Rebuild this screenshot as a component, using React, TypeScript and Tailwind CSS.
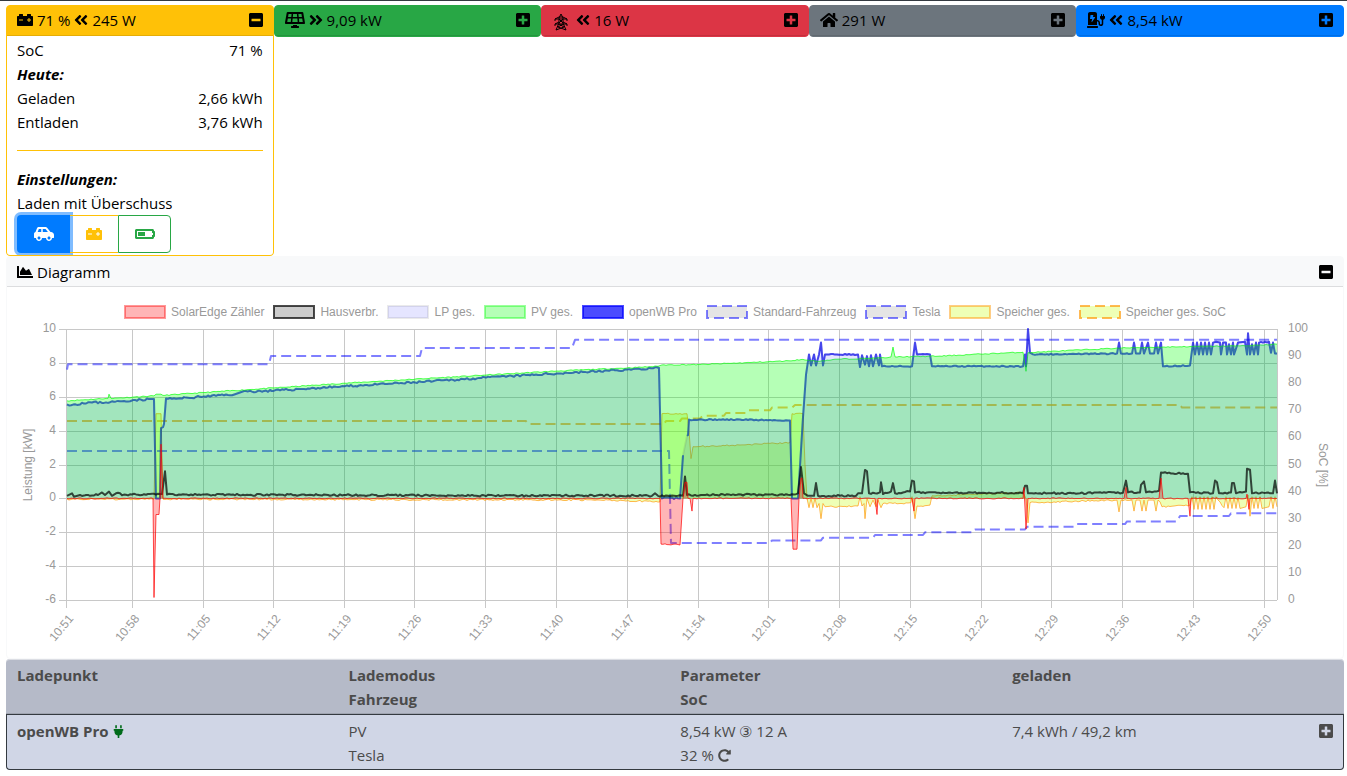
import { useMemo } from "react";
import type { ReactNode } from "react";
import {
  FaAngleDoubleLeft,
  FaAngleDoubleRight,
  FaBatteryHalf,
  FaCarBattery,
  FaCarSide,
  FaChargingStation,
  FaChartArea,
  FaHome,
  FaMinusSquare,
  FaPlug,
  FaPlusSquare,
  FaRedoAlt,
  FaSolarPanel,
} from "react-icons/fa";

type Point = [number, number];

const PLOT = { left: 67, right: 1277, top: 329, bottom: 600 };

const kwToY = (kw: number) => PLOT.top + ((10 - kw) * (PLOT.bottom - PLOT.top)) / 16;
const socToY = (soc: number) => PLOT.bottom - (soc * (PLOT.bottom - PLOT.top)) / 100;

const X_TICKS: [number, string][] = [
  [67, "10:51"],
  [133, "10:58"],
  [204, "11:05"],
  [274, "11:12"],
  [345, "11:19"],
  [415, "11:26"],
  [486, "11:33"],
  [557, "11:40"],
  [628, "11:47"],
  [699, "11:54"],
  [769, "12:01"],
  [840, "12:08"],
  [911, "12:15"],
  [982, "12:22"],
  [1052, "12:29"],
  [1123, "12:36"],
  [1194, "12:43"],
  [1265, "12:50"],
];

const KW_TICKS = [10, 8, 6, 4, 2, 0, -2, -4, -6];
const SOC_TICKS = [100, 90, 80, 70, 60, 50, 40, 30, 20, 10, 0];

// swings between two values, one turn every step
function zigzag(from: number, to: number, step: number, a: number, b: number): Point[] {
  const out: Point[] = [];
  for (let x = from, i = 0; x <= to; x += step, i++) {
    out.push([x, i % 2 === 0 ? a : b]);
  }
  return out;
}

const PV: Point[] = [
  [67, 5.76], [106, 5.9], [108, 5.9], [109, 6.15], [111, 5.9], [133, 5.98], [154, 6.05], [156, 6.15], [161, 6.15],
  [163, 6.08], [204, 6.25], [274, 6.52], [345, 6.8], [415, 7.04], [486, 7.28], [557, 7.52], [627, 7.7], [658, 7.8],
  [662, 7.88], [700, 7.9], [750, 8.02], [789, 8.12], [801, 8.2], [817, 8.1], [839, 8.22], [887, 8.3], [891, 8.35],
  [893, 8.93], [895, 8.35], [940, 8.4], [981, 8.52], [1023, 8.63], [1026, 7.5], [1028, 8.6], [1051, 8.68],
  [1122, 8.88], [1193, 8.97], [1240, 9], [1277, 9.1],
];

const WALLBOX_A: Point[] = [
  [67, 5.55], [80, 5.55], [82, 5.65], [110, 5.68], [133, 5.8], [154, 5.87], [156, 0], [160, 0], [161, 4.15], [163, 4.2],
  [164, 4.4], [166, 5.9], [176, 5.88], [204, 6.02], [235, 6.15], [242, 6.3], [274, 6.36], [345, 6.62], [415, 6.85],
  [486, 7.13], [557, 7.38], [627, 7.6], [659, 7.7], [662, 0], [680, 0], [683, 2.55],
];

const WALLBOX_B: Point[] = [
  [687, 3.7], [688, 3.75], [689, 4.65], [740, 4.65], [790, 4.6], [792, 0], [798, 0], [803, 4.8], [806, 7.3], [809, 8.5],
  [811, 7.85], [814, 8.5], [816, 7.85], [819, 8.5], [821, 9.2], [823, 7.85], [825, 8.5], [858, 8.5], [860, 7.75],
  [862, 8.45], [865, 7.9], [867, 8.4], [869, 7.8], [871, 8.45], [873, 7.8], [876, 8.5], [879, 7.85], [880, 8.5],
  [882, 7.8], [912, 7.8], [915, 9.2], [917, 8.5], [930, 8.5], [932, 7.8], [1023, 7.8], [1025, 8.5], [1026, 7.8],
  [1028, 10], [1030, 8.6], [1033, 8.5], [1117, 8.55], [1119, 9.2], [1121, 8.55], [1132, 8.55], [1134, 9.2],
  [1136, 8.55], [1140, 8.55], [1142, 9.2], [1144, 8.55], [1148, 9.2], [1150, 8.55], [1154, 8.55], [1156, 9.2],
  [1158, 8.55], [1161, 9.2], [1163, 7.8], [1190, 7.85], [1193, 9.2],
  ...zigzag(1195, 1214, 2, 8.5, 9.2),
  [1216, 9.25], [1220, 9.2], [1221, 8.5], [1223, 9.2], [1226, 9.2], [1227, 8.5], [1229, 9.1], [1231, 8.5],
  [1233, 9.2], [1234, 8.5], [1238, 9.2], [1245, 9.25], [1247, 8.5], [1248, 9.75], [1250, 8.5], [1252, 9.1],
  [1254, 8.5], [1256, 9.2], [1258, 8.5], [1259, 9.2], [1269, 9.25], [1271, 8.6], [1273, 9.2], [1275, 8.55],
  [1277, 8.55],
];

const HOUSE: Point[] = [
  [67, 0.15], [72, 0.3], [74, 0.1], [80, 0.2], [98, 0.2], [102, 0.35], [105, 0.2], [109, 0.4], [112, 0.15], [116, 0.3],
  [124, 0.22], [162, 0.25], [165, 1.6], [167, 0.22], [300, 0.2], [450, 0.17], [620, 0.16], [652, 0.15], [655, 0.3],
  [658, 0.15], [683, 0.15], [685, 1.3], [687, 0.2], [770, 0.22], [790, 0.2], [798, 0.3], [801, 1.85], [804, 0.3],
  [808, 0.15], [814, 0.15], [816, 0.9], [818, 0.15], [856, 0.15], [858, 0.3], [862, 0.3], [865, 1.68], [867, 1.6],
  [869, 0.3], [880, 0.35], [881, 0.95], [883, 0.25], [891, 0.4], [893, 0.9], [895, 0.3], [910, 0.4], [912, 1.05],
  [914, 1], [915, 0.35], [1000, 0.33], [1023, 0.3], [1025, 0.75], [1027, 0.75], [1028, 0.3], [1123, 0.33],
  [1126, 1.05], [1128, 0.35], [1140, 0.35], [1141, 0.8], [1144, 1], [1146, 0.35], [1159, 0.45], [1161, 1.52],
  [1188, 1.45], [1190, 0.35], [1213, 0.3], [1215, 1.05], [1217, 0.95], [1219, 0.3], [1231, 0.35], [1232, 0.9],
  [1234, 0.9], [1236, 0.3], [1246, 0.4], [1247, 1.75], [1250, 1.7], [1252, 0.3], [1273, 0.3], [1275, 1.05],
  [1277, 0.3],
];

const METER: Point[] = [
  [67, 0], [153, 0], [154, -5.85], [156, -0.95], [159, -0.95], [160, 0], [161, 3.2], [163, 0], [660, 0], [661, -2.7],
  [680, -2.75], [683, 0], [685, 0.95], [687, 0.95], [688, 0], [690, 0], [692, -0.75], [693, 0], [791, 0],
  [793, -3], [797, -3], [799, 0], [801, 1.2], [802, 1.2], [803, 0], [875, 0], [877, -0.95], [878, 0], [912, 0],
  [914, -0.75], [915, 0], [1023, 0], [1024, 0.65], [1026, -1.8], [1028, 0], [1124, 0], [1126, 0.65], [1127, 0],
  [1159, 0], [1161, 1.2], [1163, 0], [1188, 0], [1190, -1.05], [1191, 0], [1246, 0], [1247, 0.25], [1249, -0.65],
  [1250, 0], [1277, 0],
];

const STORAGE: Point[] = [
  [67, -0.05], [154, -0.05], [156, 5], [161, 5], [163, -0.05], [600, -0.1], [660, -0.2], [662, 5], [687, 5], [689, 4],
  [691, 2.35], [693, 3.05], [740, 3.15], [790, 3.3], [792, 5], [803, 5], [805, 2], [807, 0],
  ...zigzag(809, 817, 2, -0.55, 0),
  [819, -0.3], [821, -1.2], [823, -0.3], [825, -0.5], [858, -0.45], [860, 0.1], [862, -0.45], [864, -0.3],
  [865, -1.2], [867, 0], [870, -0.5], [873, -0.1], [876, -0.5], [878, -0.1], [881, -0.55], [883, -0.3],
  [900, -0.3], [911, -0.25], [912, 0.1], [915, -1.2], [917, -0.45], [930, -0.4], [932, 0.15], [1000, 0.3],
  [1023, 0.35], [1026, 0], [1028, -1.45], [1030, -0.25], [1117, -0.1], [1119, -0.8], [1121, -0.1], [1132, -0.1],
  [1134, -0.75], [1136, -0.1], [1140, -0.1], [1142, -0.75], [1144, -0.1], [1146, -0.75], [1148, -0.1],
  [1154, -0.1], [1156, -0.75], [1158, -0.1], [1160, -0.2], [1162, -0.5], [1190, -0.4],
  ...zigzag(1192, 1216, 2, 0.1, -0.65),
  [1224, -0.55], [1226, 0.1],
  ...zigzag(1228, 1240, 2, -0.6, 0.05),
  [1246, -0.5], [1248, 0.2], [1250, -1.05], [1252, 0.1],
  ...zigzag(1254, 1262, 2, -0.6, 0.1),
  [1269, -0.5], [1271, 0.1], [1273, -0.6], [1275, 0.1], [1277, -0.5],
];

const STANDARD_SOC: Point[] = [
  [67, 85], [68, 87], [269, 87], [271, 90], [420, 90], [422, 93], [572, 93], [575, 96], [1277, 96],
];

const TESLA_SOC: Point[] = [
  [67, 55], [669, 55], [671, 21], [770, 21], [772, 22], [821, 22], [823, 23], [873, 23], [875, 24], [923, 24],
  [925, 25], [973, 25], [975, 26], [1025, 26], [1027, 27], [1075, 27], [1077, 28], [1125, 28], [1127, 29],
  [1177, 29], [1180, 31], [1229, 31], [1231, 32], [1277, 32],
];

const STORAGE_SOC: Point[] = [
  [67, 66], [526, 66], [528, 65], [664, 65], [666, 66], [680, 66], [682, 67], [700, 67], [703, 68], [724, 68],
  [726, 69], [747, 69], [749, 70], [770, 70], [772, 71], [792, 71], [795, 72], [1180, 72], [1182, 71], [1277, 71],
];

// fills the long stretches with samples that jitter a little
function withJitter(points: Point[], amount: number, seed: number): Point[] {
  let state = seed;
  const next = () => {
    state = (state * 16807) % 2147483647;
    return state / 2147483647 - 0.5;
  };
  const out: Point[] = [points[0]];
  for (let i = 1; i < points.length; i++) {
    const [x0, v0] = points[i - 1];
    const [x1, v1] = points[i];
    if (x1 - x0 > 7) {
      for (let x = x0 + 2; x < x1 - 1; x += 2) {
        out.push([x, v0 + ((v1 - v0) * (x - x0)) / (x1 - x0) + next() * amount]);
      }
    }
    out.push([x1, v1]);
  }
  return out;
}

function linePath(points: Point[], toY: (v: number) => number) {
  return points.map(([x, v], i) => `${i === 0 ? "M" : "L"}${x} ${toY(v).toFixed(1)}`).join("");
}

function areaPath(points: Point[]) {
  const zero = kwToY(0).toFixed(1);
  return `${linePath(points, kwToY)}L${points[points.length - 1][0]} ${zero}L${points[0][0]} ${zero}Z`;
}

interface LegendEntry {
  label: string;
  fill: string;
  stroke: string;
  dashed?: boolean;
}

const LEGEND: LegendEntry[] = [
  { label: "SolarEdge Zähler", fill: "rgba(255,10,13,0.3)", stroke: "rgba(255,0,0,0.4)" },
  { label: "Hausverbr.", fill: "rgba(0,0,0,0.2)", stroke: "rgba(0,0,0,0.7)" },
  { label: "LP ges.", fill: "rgba(0,0,255,0.1)", stroke: "rgba(50,50,55,0.1)" },
  { label: "PV ges.", fill: "rgba(10,255,13,0.3)", stroke: "rgba(10,255,13,0.4)" },
  { label: "openWB Pro", fill: "rgba(0,0,255,0.7)", stroke: "rgba(0,0,255,0.7)" },
  { label: "Standard-Fahrzeug", fill: "rgba(0,0,0,0.1)", stroke: "rgba(0,0,255,0.5)", dashed: true },
  { label: "Tesla", fill: "rgba(0,0,0,0.1)", stroke: "rgba(0,0,255,0.5)", dashed: true },
  { label: "Speicher ges.", fill: "rgba(200,255,13,0.3)", stroke: "rgba(255,155,13,0.5)" },
  { label: "Speicher ges. SoC", fill: "rgba(200,255,13,0.3)", stroke: "rgba(255,155,13,0.7)", dashed: true },
];

function Legend() {
  return (
    <ul className="flex flex-wrap justify-center gap-x-[9px] pt-[18px] pb-px font-['Liberation_Sans',Arial,sans-serif] text-xs leading-[14px] text-[#999]">
      {LEGEND.map((entry) => (
        <li key={entry.label} className="flex items-center gap-[5px]">
          <svg width="42" height="14" viewBox="0 0 42 14" aria-hidden="true">
            <rect
              x="1"
              y="1"
              width="40"
              height="12"
              fill={entry.fill}
              stroke={entry.stroke}
              strokeWidth="2"
              strokeDasharray={entry.dashed ? "10 5" : undefined}
            />
          </svg>
          {entry.label}
        </li>
      ))}
    </ul>
  );
}

function PowerChart() {
  const paths = useMemo(() => {
    const pv = withJitter(PV, 0.06, 11);
    const wallboxA = withJitter(WALLBOX_A, 0.12, 23);
    const wallboxB = withJitter(WALLBOX_B, 0.07, 31);
    const house = withJitter(HOUSE, 0.11, 47);
    const meter = withJitter(METER, 0.07, 59);
    const storage = withJitter(STORAGE, 0.09, 71);
    const total = [...wallboxA, ...wallboxB];
    return {
      pvLine: linePath(pv, kwToY),
      pvArea: areaPath(pv),
      wallboxA: linePath(wallboxA, kwToY),
      wallboxB: linePath(wallboxB, kwToY),
      totalLine: linePath(total, kwToY),
      totalArea: areaPath(total),
      house: linePath(house, kwToY),
      meterLine: linePath(meter, kwToY),
      meterArea: areaPath(meter),
      storageLine: linePath(storage, kwToY),
      storageArea: areaPath(storage),
    };
  }, []);

  return (
    <svg
      className="block h-auto w-full font-['Liberation_Sans',Arial,sans-serif] text-xs"
      viewBox="7 320 1336 338"
      role="img"
      aria-label="Leistung und SoC"
    >
      <g stroke="#c8c8c8" strokeWidth="1" shapeRendering="crispEdges">
        {KW_TICKS.map((kw) => (
          <line key={kw} x1="59" x2={PLOT.right} y1={Math.round(kwToY(kw)) + 0.5} y2={Math.round(kwToY(kw)) + 0.5} />
        ))}
        {X_TICKS.map(([x, label]) => (
          <line key={label} x1={x - 0.5} x2={x - 0.5} y1={PLOT.top} y2="608" />
        ))}
        <line x1="1277.5" x2="1277.5" y1={PLOT.top} y2={PLOT.bottom} />
      </g>

      <g fill="#999">
        {KW_TICKS.map((kw) => (
          <text key={kw} x="56" y={kwToY(kw) + 3} textAnchor="end">
            {kw}
          </text>
        ))}
        {SOC_TICKS.map((soc) => (
          <text key={soc} x="1288" y={socToY(soc) + 3}>
            {soc}
          </text>
        ))}
        {X_TICKS.map(([x, label]) => (
          <text key={label} transform={`translate(${x + 7} 619) rotate(-50)`} textAnchor="end">
            {label}
          </text>
        ))}
        <text transform="translate(32 465) rotate(-90)" textAnchor="middle">
          Leistung [kW]
        </text>
        <text transform="translate(1319 465) rotate(90)" textAnchor="middle">
          SoC [%]
        </text>
      </g>

      <g fill="none" strokeLinejoin="round">
        <path d={linePath(STORAGE_SOC, socToY)} stroke="rgba(255,155,13,0.7)" strokeWidth="2" strokeDasharray="10 5" />
        <path d={paths.storageArea} fill="rgba(200,255,13,0.3)" />
        <path d={paths.storageLine} stroke="rgba(255,155,13,0.7)" strokeWidth="1" />
        <path d={linePath(TESLA_SOC, socToY)} stroke="rgba(0,0,255,0.5)" strokeWidth="2" strokeDasharray="10 5" />
        <path d={linePath(STANDARD_SOC, socToY)} stroke="rgba(0,0,255,0.5)" strokeWidth="2" strokeDasharray="10 5" />
        <path d={paths.wallboxA} stroke="rgba(0,0,255,0.7)" strokeWidth="2" />
        <path d={paths.wallboxB} stroke="rgba(0,0,255,0.7)" strokeWidth="2" />
        <path d={paths.pvArea} fill="rgba(10,255,13,0.3)" />
        <path d={paths.pvLine} stroke="rgba(10,255,13,0.7)" strokeWidth="1" />
        <path d={paths.totalArea} fill="rgba(0,0,255,0.1)" />
        <path d={paths.totalLine} stroke="rgba(50,50,55,0.1)" strokeWidth="2" />
        <path d={paths.house} stroke="rgba(0,0,0,0.7)" strokeWidth="2" />
        <path d={paths.meterArea} fill="rgba(255,10,13,0.3)" />
        <path d={paths.meterLine} stroke="rgba(255,0,0,0.7)" strokeWidth="1" />
      </g>
    </svg>
  );
}

function PylonIcon() {
  return (
    <svg className="mt-1 h-[18px] w-5" viewBox="0 0 20 18" fill="none" stroke="currentColor" strokeWidth="1" aria-hidden="true">
      <path d="M7 5 9 1l2 4M7 4h4M3 6l4-2M15 6l-4-2M3 6h12M3 6v2M15 6v2M7 5v5M11 5v5M7 6l4 4M11 6l-4 4" />
      <path d="M3 11l4-2M15 11l-4-2M3 11h12M3 11v2M15 11v2M7 10 4 17M11 10l3 7M7 11l5 3M11 11l-5 3M6 14l8 3M12 14l-8 3" />
    </svg>
  );
}

interface TileProps {
  icon: ReactNode;
  label?: string;
  flow?: "in" | "out";
  value: string;
  color: string;
  open?: boolean;
  children?: ReactNode;
}

function Tile({ icon, label, flow, value, color, open, children }: TileProps) {
  return (
    <section className={`min-w-0 flex-1 overflow-hidden rounded border ${color}`}>
      <header className="flex h-[30px] items-center gap-1 border-b border-black/10 px-[10px] pb-px">
        {icon}
        {label && <span>{label}</span>}
        {flow === "in" && <FaAngleDoubleLeft className="h-4 w-[14px]" />}
        {flow === "out" && <FaAngleDoubleRight className="h-4 w-[14px]" />}
        <span>{value}</span>
        <button type="button" className="ml-auto" aria-label={open ? "Zuklappen" : "Aufklappen"}>
          {open ? <FaMinusSquare className="h-4 w-[14px]" /> : <FaPlusSquare className="h-4 w-[14px]" />}
        </button>
      </header>
      {children}
    </section>
  );
}

function Row({ label, value }: { label: string; value: string }) {
  return (
    <div className="flex justify-between">
      <span>{label}</span>
      <span>{value}</span>
    </div>
  );
}

function StorageDetails() {
  return (
    <div className="bg-white px-[10px] pt-[2px] pb-[2px]">
      <Row label="SoC" value="71 %" />
      <p className="font-bold italic">Heute:</p>
      <Row label="Geladen" value="2,66 kWh" />
      <Row label="Entladen" value="3,76 kWh" />
      <hr className="my-4 border-[#ffc107]" />
      <p className="font-bold italic">Einstellungen:</p>
      <p>Laden mit Überschuss</p>
      <div className="flex">
        <button
          type="button"
          aria-label="Fahrzeuge zuerst"
          className="flex h-[38px] w-[53px] items-center justify-center rounded-l bg-[#007bff] text-white ring-3 ring-[#007bff]/50"
        >
          <FaCarSide className="h-4 w-5" />
        </button>
        <button
          type="button"
          aria-label="Speicher zuerst"
          className="flex h-[38px] w-12 items-center justify-center border-y border-[#ffc107] text-[#ffc107]"
        >
          <FaCarBattery className="size-4" />
        </button>
        <button
          type="button"
          aria-label="Mindest-SoC des Speichers"
          className="flex h-[38px] w-[53px] items-center justify-center rounded-r border border-[#28a745] text-[#28a745]"
        >
          <FaBatteryHalf className="h-4 w-5" />
        </button>
      </div>
    </div>
  );
}

function ChargePointTable() {
  return (
    <table className="w-full table-fixed border-separate border-spacing-0 text-left text-[#4b4b4b]">
      <colgroup>
        <col className="w-[25.6%]" />
        <col className="w-[24.8%]" />
        <col className="w-[24.8%]" />
        <col className="w-[24.8%]" />
      </colgroup>
      <thead className="bg-[#b5bac8] align-top">
        <tr>
          <th className="rounded-tl border-t border-b border-t-[#dcdee4] border-b-[#9fa4b0] pt-[3px] pb-[2px] pl-[11px]">
            Ladepunkt
          </th>
          <th className="border-t border-b border-t-[#dcdee4] border-b-[#9fa4b0] pt-[3px] pb-[2px]">
            Lademodus
            <br />
            Fahrzeug
          </th>
          <th className="border-t border-b border-t-[#dcdee4] border-b-[#9fa4b0] pt-[3px] pb-[2px]">
            Parameter
            <br />
            SoC
          </th>
          <th className="rounded-tr border-t border-b border-t-[#dcdee4] border-b-[#9fa4b0] pt-[3px] pb-[2px]">geladen</th>
        </tr>
      </thead>
      <tbody className="bg-[#d0d6e6] align-top">
        <tr>
          <th scope="row" className="rounded-bl border border-r-0 border-[#343a40] pt-1 pb-[2px] pl-[10px]">
            <span className="flex items-center gap-1">
              openWB Pro
              <FaPlug className="h-[13px] w-[11px] text-[#006b1a]" />
            </span>
          </th>
          <td className="border-y border-[#343a40] pt-1 pb-[2px]">
            PV
            <br />
            Tesla
          </td>
          <td className="border-y border-[#343a40] pt-1 pb-[2px]">
            8,54 kW ③ 12 A
            <span className="flex items-center gap-1">
              32 %
              <button type="button" aria-label="SoC aktualisieren">
                <FaRedoAlt className="size-[13px]" />
              </button>
            </span>
          </td>
          <td className="rounded-br border border-l-0 border-[#343a40] pt-1 pr-[10px] pb-[2px]">
            <span className="flex items-center justify-between">
              7,4 kWh / 49,2 km
              <button type="button" aria-label="Aufklappen">
                <FaPlusSquare className="h-4 w-[14px]" />
              </button>
            </span>
          </td>
        </tr>
      </tbody>
    </table>
  );
}

export default function App() {
  return (
    <main className="border-t border-[#343a40] bg-white pt-1 pr-[3px] pb-[7px] pl-[6px] font-['Open_Sans','Noto_Sans',sans-serif] text-[15px] leading-6 text-black">
      <div className="flex items-start">
        <Tile
          icon={<FaCarBattery className="size-4" />}
          label="71 %"
          flow="in"
          value="245 W"
          color="border-[#ffc107] bg-[#ffc107]"
          open
        >
          <StorageDetails />
        </Tile>
        <Tile icon={<FaSolarPanel className="h-4 w-5" />} flow="out" value="9,09 kW" color="border-[#28a745] bg-[#28a745]" />
        <Tile icon={<PylonIcon />} flow="in" value="16 W" color="border-[#dc3545] bg-[#dc3545]" />
        <Tile icon={<FaHome className="h-4 w-[18px]" />} value="291 W" color="border-[#6c757d] bg-[#6c757d]" />
        <Tile
          icon={<FaChargingStation className="h-4 w-[18px]" />}
          flow="in"
          value="8,54 kW"
          color="border-[#007bff] bg-[#007bff]"
        />
      </div>

      <section className="rounded border border-[#f8f9fa]">
        <header className="flex h-[30px] items-center gap-1 border-b border-[#dcdddf] bg-[#f8f9fa] px-[10px]">
          <FaChartArea className="size-4" />
          <h2>Diagramm</h2>
          <button type="button" className="ml-auto" aria-label="Zuklappen">
            <FaMinusSquare className="h-4 w-[14px]" />
          </button>
        </header>
        <Legend />
        <PowerChart />
      </section>

      <ChargePointTable />
    </main>
  );
}
